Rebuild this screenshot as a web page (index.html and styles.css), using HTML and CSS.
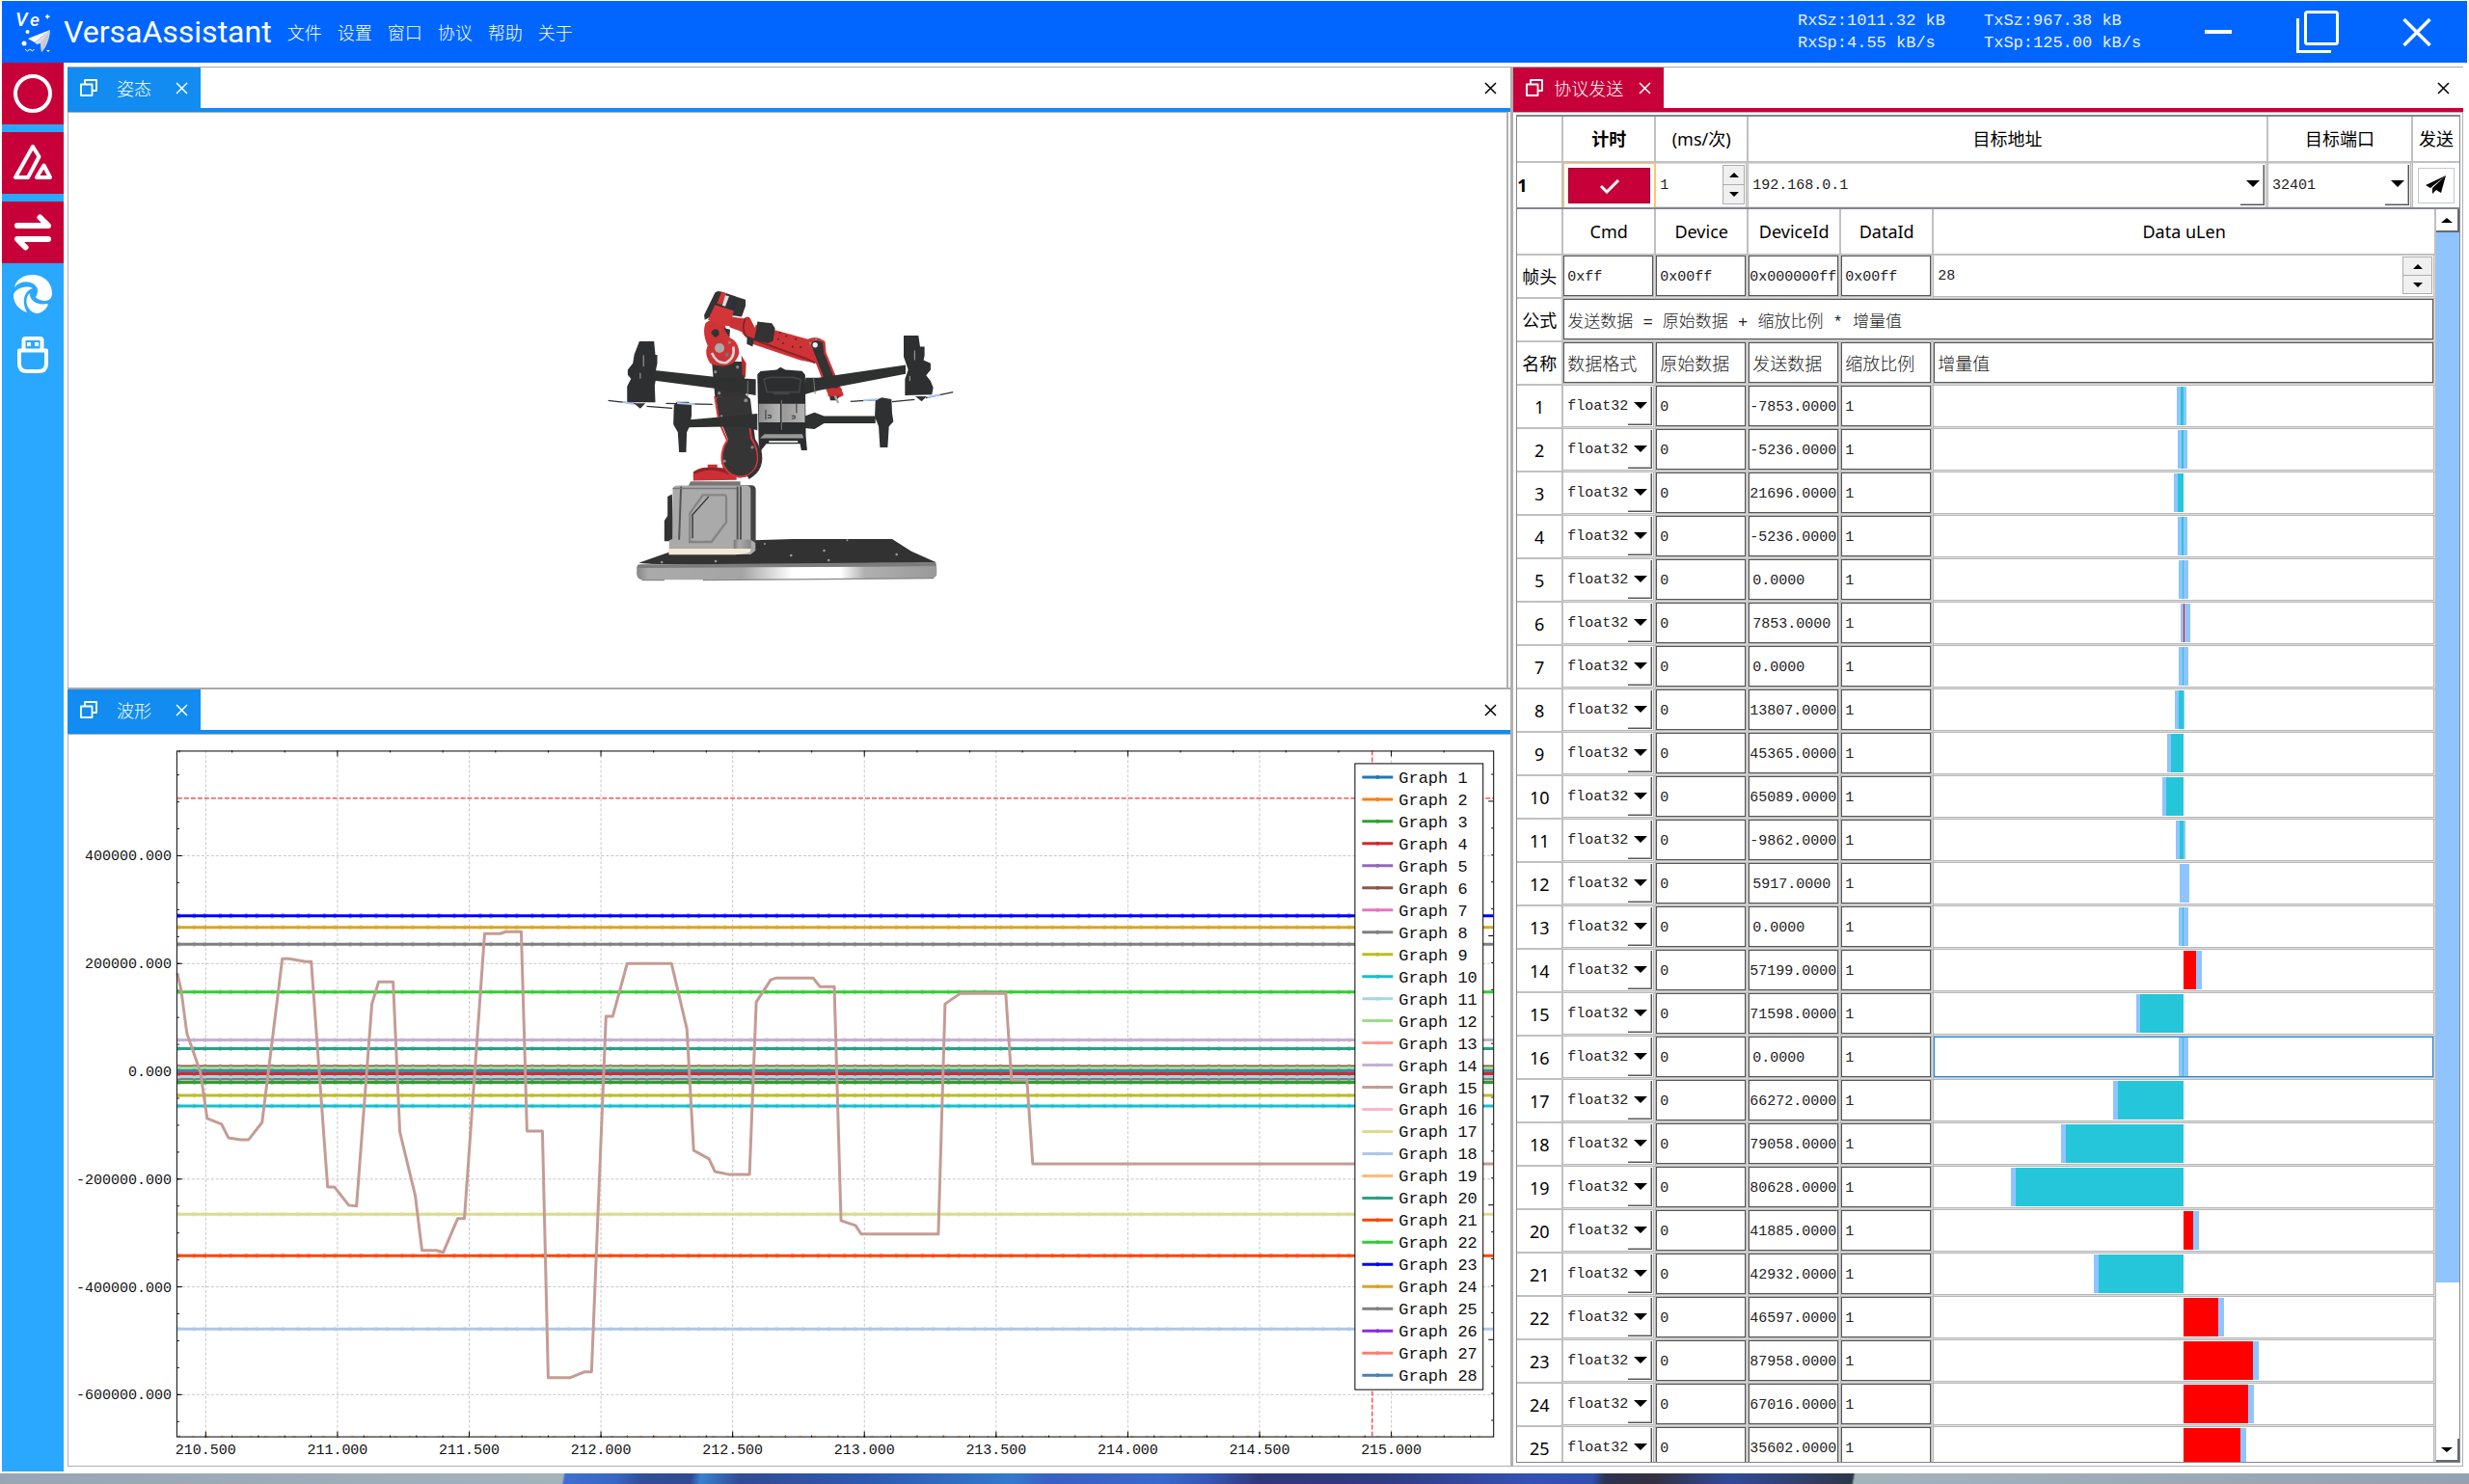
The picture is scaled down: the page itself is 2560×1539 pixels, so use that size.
FILE: index.html
```html
<!DOCTYPE html>
<html lang="zh-CN">
<head>
<meta charset="utf-8">
<title>VersaAssistant</title>
<link rel="stylesheet" href="styles.css">
</head>
<body>
<svg class="defs" aria-hidden="true">
  <symbol id="i-float" viewBox="0 0 18 18"><path d="M1 5.5h11.500v11.500H1zM5 5.500V1h12v11h-4.500" fill="none" stroke="currentColor" stroke-width="1.800" stroke-linejoin="round"/></symbol>
  <symbol id="i-close" viewBox="0 0 13 13"><path d="M1 1l11 11M12 1L1 12" fill="none" stroke="currentColor" stroke-width="1.500"/></symbol>
</svg>
<div class="app">
  <header class="titlebar">
    <svg class="logo" viewBox="10 7 50 54" role="img" aria-label="Logo">
      <g fill="#fff">
        <text x="16" y="28" class="logo-text" font-size="20">V</text><text x="31" y="28" class="logo-text" font-size="19">e</text>
        <path d="M48.500 16h1.500v1.500h1.500v1.500h-1.500v1.500h-1.500v-1.500h-1.500v-1.500h1.500z"/>
        <circle cx="28.500" cy="34" r="2"/><circle cx="25" cy="46" r="2.500"/>
        <path d="M52 32L29 41l7 4z"/><path d="M52 32L36 45l2 2 4-1 1 9z" fill="#d8dce4"/><path d="M52 32l-10 14 1 9c4-3 9-14 9-23z" fill="#c8ccd4"/>
        <path d="M48 53h4l-2 2z"/>
        <path d="M26 52l2.500 2 2.500-2 2.500 2 2-2" fill="none" stroke="#fff"/>
      </g>
    </svg>
    <h1 class="brand">VersaAssistant</h1>
    <nav class="menu">
      <button>文件</button><button>设置</button><button>窗口</button><button>协议</button><button>帮助</button><button>关于</button>
    </nav>
    <div class="stats">
      <span>RxSz:1011.32 kB</span><span>TxSz:967.38 kB</span>
      <span>RxSp:4.55 kB/s</span><span>TxSp:125.00 kB/s</span>
    </div>
    <div class="winctl">
      <button aria-label="最小化"><svg width="44" height="44" viewBox="0 0 44 44"><path d="M8 22h28" stroke="#fff" stroke-width="4"/></svg></button>
      <button aria-label="还原"><svg width="44" height="44" viewBox="0 0 44 44" fill="none" stroke="#fff" stroke-width="3"><rect x="9.500" y="1.500" width="33" height="33" rx="2"/><path d="M1.500 8v34.500H36"/></svg></button>
      <button aria-label="关闭"><svg width="44" height="44" viewBox="0 0 44 44"><path d="M8.500 9l27 27M35.500 9l-27 27" stroke="#fff" stroke-width="3.500"/></svg></button>
    </div>
  </header>

  <div class="body">
    <aside class="sidebar">
      <button class="tool on" aria-label="连接"><svg viewBox="2 65 64 64"><circle cx="34" cy="97" r="18" fill="none" stroke="#fff" stroke-width="4"/></svg></button>
      <button class="tool on" aria-label="姿态"><svg viewBox="2 137 64 64" fill="none" stroke="#fff" stroke-width="4" stroke-linejoin="round"><path d="M34 152l6.500 10.500L29 184H16z"/><path d="M45.500 171.500L52 184H38z"/></svg></button>
      <button class="tool on" aria-label="协议收发"><svg viewBox="2 209 64 64" fill="none" stroke="#fff" stroke-width="6" stroke-linecap="round" stroke-linejoin="round"><path d="M18 234h32l-8.500-8.500"/><path d="M50 248H18l8.500 8.500"/></svg></button>
      <button class="tool" aria-label="波形"><svg viewBox="2 273 64 64" fill="#fff"><path d="M15 298c2-9 10-13 19-13 12 0 20 9 20 19 0 5-3 8-7 8s-9-2-10-4c3-5 3-10-2-13.500-7-4-15-2.500-20 3.500z"/><path d="M14 306c1-6 12-11 20-7-7 2-13 11-6 25-9-3-14-10-14-18z"/><path d="M30.500 304c.5 7 6.500 13 19 11 1 2-4 10-12 10-9-2-13.500-13-7-21z"/></svg></button>
      <button class="tool" aria-label="USB"><svg viewBox="2 337 64 64" fill="none" stroke="#fff" stroke-width="4"><path d="M24.500 362v-9q0-2 2-2h15q2 0 2 2v9"/><path d="M20 363.500h28V377q0 8-8 8H28q-8 0-8-8z" stroke-linejoin="round"/><path d="M28 357h4M36 357h4"/></svg></button>
    </aside>

    <main class="left">
      <section class="panel blue attitude">
        <div class="strip">
          <div class="tab"><svg class="ic18"><use href="#i-float"/></svg><span>姿态</span><button aria-label="关闭标签"><svg class="ic13"><use href="#i-close"/></svg></button></div>
          <button class="dock-close" aria-label="关闭面板"><svg class="ic13"><use href="#i-close"/></svg></button>
        </div>
        <div class="view">
          <svg viewBox="71 118 1494 594" role="img" aria-label="机械臂与无人机三维模型">
            <defs>
              <linearGradient id="rim"><stop offset="0" stop-color="#888"/><stop offset=".04" stop-color="#aaa"/><stop offset=".35" stop-color="#a4a4a4"/><stop offset=".52" stop-color="#fff"/><stop offset=".68" stop-color="#fff"/><stop offset=".76" stop-color="#b0b0b0"/><stop offset="1" stop-color="#999"/></linearGradient>
              <linearGradient id="tank"><stop offset="0" stop-color="#8c8c8c"/><stop offset=".45" stop-color="#b4b4b4"/><stop offset=".55" stop-color="#999"/><stop offset="1" stop-color="#b4b4b4"/></linearGradient>
              <linearGradient id="cuff"><stop offset="0" stop-color="#777"/><stop offset=".3" stop-color="#aaa"/><stop offset="1" stop-color="#888"/></linearGradient>
            </defs>
            <g transform="translate(600 280) scale(.3333)">
              <!-- base plate -->
              <path d="M190 912L282 880 550 842 670 838H980L1040 876 1116 910 900 918 340 926z" fill="#323232"/>
              <path d="M184 925q5-10 20-10l360 5 370-8h165q20 0 20 15v20q0 12-20 14l-500 4H205q-21 0-21-20z" fill="url(#rim)"/>
              <path d="M186 918l930-8 2 12-180 2-370 2-380 2z" fill="#7c7c7c"/>
              <path d="M200 966h70M390 966l720-6" stroke="#888" stroke-width="4"/>
              <g fill="#999"><circle cx="262" cy="910" r="4"/><circle cx="430" cy="907" r="4"/><circle cx="665" cy="889" r="4"/><circle cx="782" cy="904" r="4"/><circle cx="768" cy="874" r="4"/><circle cx="840" cy="842" r="3"/><circle cx="994" cy="886" r="4"/><circle cx="583" cy="853" r="3"/></g>
              <!-- pedestal -->
              <path d="M294 698l-14 8v60l-10 15v64h30z" fill="#333"/>
              <path d="M505 670h40q10 4 10 14v164h-50z" fill="#444"/>
              <path d="M296 685q0-14 16-14h215q12 2 12 14v155l15 10v24l-15 12H285v-44l10-4z" fill="#aaa"/>
              <path d="M284 868h255v10q-20 9-60 9H284z" fill="#f3ead6"/>
              <path d="M322 674l-6 166M498 674v166M508 674v166" stroke="#555" stroke-width="6" fill="none"/>
              <path d="M296 680h200" stroke="#777" stroke-width="4"/>
              <path d="M486 840h54v28h-54z" fill="url(#cuff)"/>
              <path d="M350 757l40-56h70l3 8v76l-46 62h-68z" fill="#aaa" stroke="#858585" stroke-width="7"/>
              <path d="M408 706l-50 56v74" fill="none" stroke="#333" stroke-width="4"/>
              <path d="M352 658h155v14H345z" fill="#777"/>
              <path d="M360 656v-25q15-16 45-16v-9h30v9q45 0 60 25v14z" fill="#cc3035"/>
              <path d="M362 632q50-25 110 0" fill="none" stroke="#8f2528" stroke-width="9"/>
              <!-- lower arm -->
              <path d="M430 392l80-16 28 25 15 125q28 40 15 80-12 38-60 40-50-2-60-45-2-45 20-75l-30-75z" fill="#353535"/>
              <path d="M505 378l-77 18 12 75 26 60q-20 30-16 65 14 46 55 48 48-2 56-50 3-35-20-70l-8-60" fill="none" stroke="#d9363a" stroke-width="6"/>
              <path d="M566 560q14 60-35 86" stroke="#333" stroke-width="12" fill="none"/>
              <path d="M418 285h98l8 105-96 6z" fill="#333"/>
              <path d="M510 265l15 25-2 45-10-10z" fill="#b52c30"/>
              <!-- shoulder and wrist -->
              <path d="M398 165q30-25 60 5l15 40q30 12 30 50-10 35-45 38-35 0-45-8-20-30-8-55-18-40-7-70z" fill="#ce3437"/>
              <path d="M415 195q12-20 25-5 5 14-12 20zM455 180l20 5-2 25z" fill="#333"/>
              <path d="M418 258q15 35 45 30 28-15 22-50" fill="none" stroke="#d5d5d5" stroke-width="8"/>
              <circle cx="442" cy="243" r="15" fill="#aaa"/><circle cx="465" cy="263" r="6" fill="#777"/><circle cx="473" cy="225" r="5" fill="#888"/><circle cx="429" cy="317" r="5" fill="#888"/><circle cx="498" cy="302" r="5" fill="#888"/><circle cx="441" cy="383" r="5" fill="#888"/><circle cx="524" cy="406" r="6" fill="#888"/><circle cx="448" cy="455" r="4" fill="#888"/><circle cx="544" cy="552" r="5" fill="#888"/><circle cx="457" cy="595" r="5" fill="#888"/>
              <path d="M428 70q6-8 20-3l75 25v20l-12 33-80-10-35 20-2-15z" fill="#333"/>
              <path d="M448 68l16 5-16 35-14-5z" fill="#d43538"/><path d="M460 78l12 3-12 32-10-3z" fill="#ddd"/><path d="M485 88l12 3-10 35-10-3z" fill="#2b2e45"/>
              <path d="M428 108l58 18-10 48q-35 0-70-20z" fill="#d33639"/>
              <path d="M478 145l40 5q15-12 22 5l18 35-12 20q-20 10-35-18l-38-15z" fill="#c93336"/>
              <path d="M523 150q-15 30 3 57" fill="none" stroke="#852225" stroke-width="5"/>
              <!-- upper arm -->
              <path d="M555 170l162 45q30-15 54 10l2 20-30 45-50-10-155-52z" fill="#d03336"/>
              <path d="M530 210l185 67 25 12" stroke="#872326" stroke-width="6" fill="none"/>
              <path d="M560 160l45 5 10 15-6 40-15 8-45-10 8-35zM528 205l22 8-5 25-18-8z" fill="#333"/>
              <g fill="#333"><circle cx="630" cy="195" r="3"/><circle cx="650" cy="205" r="3"/><circle cx="680" cy="215" r="3"/><circle cx="640" cy="228" r="3"/><circle cx="670" cy="238" r="3"/><circle cx="695" cy="240" r="3"/><circle cx="625" cy="215" r="3"/></g>
              <path d="M722 228q15-22 45-5l4 35 54 130q-20 15-43-5z" fill="#333" stroke="#cf3438" stroke-width="7"/>
              <circle cx="740" cy="233" r="8" fill="#eee"/><circle cx="725" cy="228" r="4" fill="#888"/><circle cx="743" cy="215" r="4" fill="#888"/>
              <path d="M782 366l40 2 3 20-45 6z" fill="#cc3034"/><path d="M785 392l30 2-8 12h-20z" fill="#333"/><path d="M802 392l10 22" stroke="#aaa" stroke-width="7"/>
              <!-- drone arms -->
              <path d="M240 312l185 20 130 8v50l-130-22-185-24zM710 335h40l272-40v28l-272 52-42 12z" fill="#2f3131"/>
              <path d="M340 467l220-20v52l-45-12-175 3zM708 455l30-12 30 12h160v22h-160l-30 18-30-3z" fill="#2f3131"/>
              <path d="M530 345v50M735 335l5 50" stroke="#777" stroke-width="3"/>
              <!-- body -->
              <path d="M560 325l10-10 50-5 12-8 15 8 52 4 10 12 2 190 4 45h-18l-4-20h-105l-20 25-4-30z" fill="#2c2d2f"/>
              <path d="M564 416h144v58H564z" fill="url(#tank)"/><path d="M634 404v98" stroke="#222" stroke-width="6"/><path d="M635 404v94" stroke="#aaa" stroke-width="2"/>
              <path d="M586 435v30M592 452h10v8h-10M682 415v30M667 454h10v8h-10" fill="none" stroke="#333" stroke-width="3"/>
              <path d="M582 511h118l4 13H568z" fill="#999"/><path d="M596 532h90v5h-90z" fill="#fff"/>
              <path d="M580 340l20-6h70l25 6-5 40H590zM610 385h50" fill="none" stroke="#444" stroke-width="5"/>
              <!-- rotors -->
              <path d="M192 222h46l4 42h6v26l-5 24v28l-3 18 2 52h-88v-50l12-24-10-12v-16l16-20 4-26z" fill="#2e2f30"/>
              <path d="M1016 204h46l5 34h14v28l-3 14 22 10v20l-14 18 14 18 8 20-4 22-84 2v-50l10-30-14-40z" fill="#2e2f30"/>
              <path d="M300 420l10-10h35l10 10v30l-5 35-10 20-2 62h-22l-4-62-14-25z" fill="#2f3031"/>
              <path d="M928 405l20-8 30 5 2 45 4 25-14 15-4 65h-24l-4-65-12-30z" fill="#2f3031"/>
              <path d="M205 265v35M195 320v18M1050 250v30M1035 330v15" stroke="#aaa" stroke-width="3"/>
              <path d="M175 415l20 16 16-16zM1052 393l20 16 16-16z" fill="#333"/>
              <path d="M95 406l85 10M275 415l145 3M850 409l80-5M1085 398l85-18M980 410l70-7M215 424l80 6" stroke="#2d2f34" stroke-width="4" fill="none"/>
              <path d="M140 411l35 6M310 414l55 4M890 406l45-4M1090 396l40-8" stroke="#a9c9ef" stroke-width="6" fill="none"/>
            </g>
          </svg>
        </div>
      </section>

      <section class="panel blue wave">
        <div class="strip">
          <div class="tab"><svg class="ic18"><use href="#i-float"/></svg><span>波形</span><button aria-label="关闭标签"><svg class="ic13"><use href="#i-close"/></svg></button></div>
          <button class="dock-close" aria-label="关闭面板"><svg class="ic13"><use href="#i-close"/></svg></button>
        </div>
        <div class="view"><svg id="plot" viewBox="71 762 1497 758" role="img" aria-label="波形图"></svg></div>
      </section>
    </main>

    <section class="panel red protocol">
      <div class="strip">
        <div class="tab"><svg class="ic18"><use href="#i-float"/></svg><span>协议发送</span><button aria-label="关闭标签"><svg class="ic13"><use href="#i-close"/></svg></button></div>
        <button class="dock-close" aria-label="关闭面板"><svg class="ic13"><use href="#i-close"/></svg></button>
      </div>
      <div class="view tables">
        <table class="grid target">
          <colgroup><col class="c-no"><col class="c-std"><col class="c-std"><col><col class="c-port"><col class="c-send"></colgroup>
          <thead><tr><th></th><th class="strong">计时</th><th>(ms/次)</th><th>目标地址</th><th>目标端口</th><th>发送</th></tr></thead>
          <tbody><tr>
            <th class="strong first">1</th>
            <td class="timer"><button class="check" aria-label="启用计时"><svg width="22" height="16" viewBox="0 0 22 16"><path d="M2 8l6 6L20 2" fill="none" stroke="#fff" stroke-width="3"/></svg></button></td>
            <td><div class="spin narrow"><input value="1" aria-label="毫秒每次"><span class="arrows"><button aria-label="增加"><i class="up"></i></button><button aria-label="减少"><i class="down"></i></button></span></div></td>
            <td><div class="combo"><select aria-label="目标地址"><option>192.168.0.1</option></select></div></td>
            <td><div class="combo"><select aria-label="目标端口"><option>32401</option></select></div></td>
            <td class="plain"><button class="send" aria-label="发送"><svg width="22" height="20" viewBox="0 0 22 20"><path d="M21 0L0 10l5 3zM21 0L7 13v6l4-4 5 3z"/></svg></button></td>
          </tr></tbody>
        </table>
        <div class="scroller">
          <table class="grid frame">
            <colgroup><col class="c-no"><col class="c-std"><col class="c-std"><col class="c-std"><col class="c-std"><col></colgroup>
            <thead><tr><th></th><th>Cmd</th><th>Device</th><th>DeviceId</th><th>DataId</th><th>Data uLen</th></tr></thead>
            <tbody id="rows">
              <tr><th>帧头</th>
                <td><input class="box" value="0xff" aria-label="Cmd"></td><td><input class="box" value="0x00ff" aria-label="Device"></td>
                <td><input class="box full" value="0x000000ff" aria-label="DeviceId"></td><td><input class="box" value="0x00ff" aria-label="DataId"></td>
                <td><div class="spin"><input value="28" aria-label="Data uLen"><span class="arrows"><button aria-label="增加"><i class="up"></i></button><button aria-label="减少"><i class="down"></i></button></span></div></td></tr>
              <tr><th>公式</th><td colspan="5"><input class="box mixed" value="发送数据 = 原始数据 + 缩放比例 * 增量值" aria-label="公式"></td></tr>
              <tr><th>名称</th>
                <td><input class="box cjk" value="数据格式" aria-label="名称 1"></td><td><input class="box cjk" value="原始数据" aria-label="名称 2"></td>
                <td><input class="box cjk" value="发送数据" aria-label="名称 3"></td><td><input class="box cjk" value="缩放比例" aria-label="名称 4"></td>
                <td><input class="box cjk" value="增量值" aria-label="名称 5"></td></tr>
            </tbody>
          </table>
          <div class="scrollbar"><button aria-label="向上滚动"><i class="up"></i></button><div class="thumb"></div><div class="rest"></div><button aria-label="向下滚动"><i class="down"></i></button></div>
        </div>
      </div>
    </section>
  </div>
</div>
<div class="desktop"></div>
<script src="app.js"></script>
</body>
</html>
```
FILE: styles.css
```css
* { box-sizing: border-box; }
html, body { height: 100%; margin: 0; }
body {
  display: flex; flex-direction: column; background: #fff; color: #000; overflow: hidden;
  font: 18px/24px "Noto Sans", "Noto Sans CJK SC", sans-serif;
}
button { border: 0; padding: 0; background: none; color: inherit; font: inherit; display: grid; place-items: center; }
input, select { border: 0; margin: 0; padding: 0; background: none; color: #222; border-radius: 0; min-width: 0; font: 15px/20px "Liberation Mono", "Noto Sans CJK SC", monospace; }
svg { display: block; }
.defs { display: none; }
.app { flex: 1; min-height: 0; display: flex; flex-direction: column; padding: 1px 2px 2px; }

/* title bar */
.titlebar { height: 64px; flex: none; display: flex; align-items: center; background: #0066ff; color: #fff; }
.logo { width: 50px; height: 54px; margin-left: 8px; }
.logo-text { font-family: "Roboto", sans-serif; font-style: italic; font-weight: 500; }
.brand { margin: 0 0 0 6px; font: 400 32px/40px "Roboto", sans-serif; }
.menu { display: flex; gap: 16px; margin-left: 16px; }
.menu button { font: 300 18px/24px "Noto Sans CJK SC", sans-serif; }
.stats { margin-left: auto; display: grid; grid-template-columns: 193px 163px; font: 17px/23px "Liberation Mono", monospace; color: #e6eeff; white-space: nowrap; }
.winctl { display: flex; gap: 59px; margin: 0 30px 0 58px; }

/* sidebar */
.body { flex: 1; min-height: 0; display: flex; }
.sidebar { width: 64px; flex: none; background: #2aa8ff; }
.tool { width: 64px; height: 64px; }
.tool svg { width: 64px; height: 64px; }
.tool.on { background: #c70039; }
.tool.on + .tool.on { margin-top: 8px; }

/* dock panels */
.left { flex: 1498; min-width: 0; display: flex; flex-direction: column; margin: 4px 0 5px 4px; }
.panel { display: flex; flex-direction: column; min-height: 0; min-width: 0; }
.attitude { flex: 644; }
.wave { flex: 808; }
.protocol { flex: 986; margin: 4px 4px 5px 0; border-left: 3px solid #b0b0b0; }
.blue { --accent: #128cf0; --gap: 20px; --tab: 138px; }
.red { --accent: #c70039; --gap: 11px; --tab: 156px; }
.strip { height: 47px; flex: none; display: flex; border-top: 1px solid #a8a8a8; border-bottom: 4px solid var(--accent); }
.wave .strip { height: 48px; border-top-width: 2px; }
.tab { width: var(--tab); display: flex; align-items: center; gap: var(--gap); padding: 0 13px; background: var(--accent); color: #fff; font: 300 18px/24px "Noto Sans CJK SC", sans-serif; white-space: nowrap; }
.tab button { margin-left: auto; }
.ic18 { width: 18px; height: 18px; }
.ic13 { width: 13px; height: 13px; }
.dock-close { margin: 0 14px 0 auto; }
.view { flex: 1; min-height: 0; border: 1px solid #b0b0b0; border-right: 0; }
.view > svg { width: 100%; height: 100%; }
.attitude .view { border-bottom: 0; border-right: 2px solid #b0b0b0; margin-right: 2px; }

/* plot */
.tick { font: 15px "Liberation Mono", monospace; fill: #111; }
.legend { font: 17px "Liberation Mono", monospace; fill: #111; }

/* protocol tables */
.protocol .tables { display: flex; flex-direction: column; border-right: 1px solid #b0b0b0; border-left: 0; padding: 2px 2px 3px 3px; }
.grid { width: 100%; table-layout: fixed; border-collapse: separate; border-spacing: 0; }
.c-no { width: 48px; }
.c-std { width: 96px; }
.c-port { width: 150px; }
.c-send { width: 48px; }
.target { border: 1px solid #82868f; border-top-width: 2px; border-bottom: 0; }
.grid th { height: 45px; padding: 0; border-right: 2px solid #c0c0c0; border-bottom: 2px solid #c0c0c0; background: #fff; font-weight: 400; text-align: center; white-space: nowrap; }
.grid thead th { height: 48px; }
.grid td { height: 45px; padding: 0; border-right: 3px double #b8b8b8; border-bottom: 3px double #b8b8b8; background: #dcdcdc; }
.grid th.strong { font-weight: 700; }
.grid th.first { text-align: left; }
.target td:last-child, .target th:last-child { border-right: 0; }
.target tbody td, .target tbody th { border-bottom: 0; }
.target td.timer { background: #fff; padding: 4px; border: 1px solid #ffc36b; border-bottom: 0; border-right: 2px solid #ffc36b; }
.target td.plain { background: #fff; padding: 4px 5px; }
.check { width: 100%; height: 37px; background: #c70039; border: 1px solid #9c0030; }
.send { width: 100%; height: 37px; border: 1px solid #c4c8cc; }

.box { display: block; width: 100%; height: 42px; padding: 2px 3px 0; border: 1px solid #555; background: #fff; }
.box.full { padding: 2px 0 0; }
.box.cjk { padding-top: 0; font: 300 18px/24px "Noto Sans CJK SC", sans-serif; }
.box.mixed { padding-top: 0; font: 300 17px/24px "Liberation Mono", "Noto Sans CJK SC", monospace; }

.up, .down { width: 0; height: 0; border: 5px solid transparent; }
.up { border-top: 0; border-bottom: 5px solid #000; }
.down { border-bottom: 0; border-top: 5px solid #000; }
.spin { display: flex; height: 42px; background: #fff; padding: 1px 1px 2px 4px; }
.spin input { flex: 1; padding-top: 2px; }
.arrows { width: 31px; display: flex; flex-direction: column; border: 1px solid #adadad; background: #f0f0f0; }
.narrow .arrows { width: 23px; }
.arrows button { flex: 1; }
.arrows button + button { border-top: 1px solid #adadad; }
.target .spin, .target .combo { height: 44px; }

.combo { position: relative; display: flex; height: 42px; background: #fff; }
.combo select { appearance: none; flex: 1; margin-right: 26px; padding: 2px 0 0 4px; overflow: hidden; text-overflow: clip; }
.combo::after { content: ""; position: absolute; right: 1px; top: 1px; bottom: 1px; width: 24px; border: solid #555; border-width: 0 1px 1px 0; box-shadow: inset -1px -1px #b0b0b0; }
.combo::before { content: ""; position: absolute; right: 6px; top: 17px; border: 7px solid transparent; border-top: 7px solid #000; border-bottom: 0; }

.slider { position: relative; display: block; height: 42px; background: #fff; }
.slider input { appearance: none; display: block; width: 100%; height: 42px; }
.slider input::-webkit-slider-thumb { appearance: none; width: 10px; height: 40px; background: #90c4ff; border-radius: 0; }
.slider .fill { position: absolute; top: 1px; height: 40px; pointer-events: none; }
.slider .neg { right: 50%; background: #26c6da; }
.slider .pos { left: 50%; background: #ff0000; }
.slider.focus { box-shadow: inset 0 0 0 1px #128cf0; }

.scroller { flex: 1; min-height: 0; display: flex; align-items: flex-start; overflow: hidden; border: 1px solid #82868f; border-top-width: 2px; }
.frame { flex: 1; }
.scrollbar { width: 24px; flex: none; align-self: stretch; display: flex; flex-direction: column; }
.scrollbar button { height: 24px; border: solid #666a70; border-width: 0 2px 2px 0; background: #fff; }
.scrollbar i { border-left-width: 6px; border-right-width: 6px; }
.thumb { flex: 1092; background: #90c4ff; }
.rest { flex: 162; }

/* desktop strip below the window */
.desktop {
  height: 11px; flex: none;
  background: linear-gradient(100deg, #97a5b5 0, #a3b2bb 22.8%, #3f6fd0 22.9%, #3866c4 25%, #304f98 26%, #2f4a90 28%, #3a80d0 28.400%, #304c94 30%, #2e58b0 35%, #3479cc 41%, #3a5fc4 42.500%, #3a68cc 47%, #3456b4 49%, #303878 51%, #2f3c80 56%, #3452b4 62%, #2e4fb0 64.500%, #2d3350 65%, #343040 67%, #2f4a98 70%, #30406a 73%, #2c3848 75%, #a3b2bb 75.100%, #93a2b2 100%);
}
```
FILE: app.js
```js
/* ---- data rows: sent value and slider increment ---- */
const rows = [
  ['-7853.0000', -3], ['-5236.0000', -2], ['21696.0000', -6], ['-5236.0000', -2], ['0.0000', -1],
  ['7853.0000', 1], ['0.0000', -1], ['13807.0000', -5], ['45365.0000', -13], ['65089.0000', -18],
  ['-9862.0000', -4], ['5917.0000', 0], ['0.0000', -1], ['57199.0000', 13], ['71598.0000', -45],
  ['0.0000', -1], ['66272.0000', -68], ['79058.0000', -122], ['80628.0000', -174], ['41885.0000', 10],
  ['42932.0000', -88], ['46597.0000', 36], ['87958.0000', 72], ['67016.0000', 67], ['35602.0000', 59]
];
document.getElementById('rows').insertAdjacentHTML('beforeend', rows.map(([v, d], i) => {
  const n = i + 1;
  const fill = d ? `<span class="fill ${d < 0 ? 'neg' : 'pos'}" style="width:${Math.abs(d)}px"></span>` : '';
  return `<tr><th>${n}</th>
    <td><div class="combo"><select aria-label="数据格式 ${n}"><option>float32</option></select></div></td>
    <td><input class="box" value="0" aria-label="原始数据 ${n}"></td>
    <td><input class="box${v.length > 9 ? ' full' : ''}" value="${v}" aria-label="发送数据 ${n}"></td>
    <td><input class="box" value="1" aria-label="缩放比例 ${n}"></td>
    <td><div class="slider${n === 16 ? ' focus' : ''}"><input type="range" min="-254" max="253" value="${d}" aria-label="增量值 ${n}">${fill}</div></td></tr>`;
}).join(''));

/* ---- plot ---- */
const L = 184, R = 1550, T = 778, B = 1491;
const px = (t) => 213.5 + (t - 210.5) * 273.5;
const py = (v) => 1111 - v * 111.9 / 200000;
const line = (x1, y1, x2, y2, c, w = 1, extra = '') => `<line x1="${x1}" y1="${y1}" x2="${x2}" y2="${y2}" stroke="${c}" stroke-width="${w}" ${extra}/>`;
let s = '';

for (let i = 0; i < 10; i++) {
  const t = 210.5 + i * 0.5, x = px(t);
  s += line(x, T, x, B, '#c8c8c8', 1, 'stroke-dasharray="3 2"');
  s += line(x, B, x, B - 6, '#000') + `<text class="tick" text-anchor="middle" x="${x}" y="1508">${t.toFixed(3)}</text>`;
}
for (let v = 400000; v >= -600000; v -= 200000) {
  const y = py(v);
  s += line(L, y, R, y, '#c8c8c8', 1, 'stroke-dasharray="3 2"');
  s += line(L, y, L + 5, y, '#000') + `<text class="tick" text-anchor="end" x="178" y="${y + 5}">${v.toFixed(3)}</text>`;
}
for (let x = px(210.4); x < R; x += 27.35) s += line(x, B, x, B - 2, '#000');
for (let i = 0, x = px(210.4); x < R; x += 54.7, i++) s += line(x, T, x, T + (i % 5 === 3 ? 6 : 2), '#000');
for (let y = py(550000); y < B; y += 27.975) s += line(L, y, L + 2, y, '#000');
for (let i = 0, y = 802.6; y < B; y += 27.95, i++) s += line(R, y, R - (i % 5 === 1 ? 5 : 2), y, '#000');

const levels = [
  [949.5, '#0000ff'], [961.5, '#daa520'], [979, '#7f7f7f'], [1028.5, '#32cd32'], [1078.5, '#c5b0d5'], [1087.5, '#2ca089'],
  [1106, '#8c564b'], [1107.5, '#98df8a'], [1119, '#7f7f7f'], [1116.5, '#9edae5'], [1113.5, '#d62728'], [1110.5, '#4682b4'],
  [1122.5, '#2ca02c'], [1136, '#bcbd22'], [1147, '#17becf'], [1259.5, '#dbdb8d'], [1302.5, '#ff4500'], [1378.5, '#aec7e8']
];
for (const [y, c] of levels) {
  s += line(L, y, R, y, c, 3);
  s += line(L, y, R, y, c, 5, 'stroke-opacity=".4" stroke-dasharray="3 13 3 8"');
}
s += line(L, 1490, R, 1490, '#ffbb78', 1, 'stroke-dasharray="3 12"');

const wave = '184,1009 188,1027 194,1072 208,1112 215,1160 230,1166 237,1180 250,1182 258,1182 272,1164 293,994 300,994 317,997 323,997 340,1231 347,1231 362,1250 370,1251 386,1041 393,1018 408,1018 415,1174 431,1240 438,1297 453,1297 460,1299 475,1264 482,1264 503,968 519,968 525,966 541,966 547,1173 563,1173 569,1429 592,1429 607,1423 614,1423 629,1054 636,1054 651,999 697,999 713,1067 720,1193 736,1202 742,1215 756,1218 778,1218 785,1039 800,1016 806,1014 844,1014 851,1023 866,1023 873,1266 888,1271 894,1280 974,1280 981,1041 997,1030 1044,1030 1050,1120 1066,1120 1072,1207 1550,1207';
s += `<polyline points="${wave}" fill="none" stroke="#c49c94" stroke-width="3" stroke-linejoin="round"/>`;

s += line(L, 827.5, R, 827.5, '#f00000', 1, 'stroke-dasharray="5 2"');
s += line(1424.5, T, 1424.5, B, '#ff0000', 1, 'stroke-dasharray="5 2"');
s += `<rect x="${L - .5}" y="${T + .5}" width="${R - L + 1}" height="${B - T - 1}" fill="none" stroke="#000"/>`;

const colors = ['#1f77b4', '#ff7f0e', '#2ca02c', '#d62728', '#9467bd', '#8c564b', '#e377c2', '#7f7f7f', '#bcbd22', '#17becf',
  '#9edae5', '#98df8a', '#ff9896', '#c5b0d5', '#c49c94', '#f7b6d2', '#dbdb8d', '#aec7e8', '#ffbb78', '#2ca089',
  '#ff4500', '#32cd32', '#0000ff', '#daa520', '#808080', '#8a2be2', '#fa8072', '#4682b4'];
s += '<rect x="1406.5" y="791.5" width="133" height="650" fill="#fff" stroke="#000"/>';
colors.forEach((c, i) => {
  const y = 805.5 + i * 23;
  s += line(1414, y, 1446, y, c, 3) + `<circle cx="1430" cy="${y}" r="2" fill="${c}"/>`;
  s += `<text class="legend" x="1452" y="${y + 6}">Graph ${i + 1}</text>`;
});
document.getElementById('plot').innerHTML = s;
```
